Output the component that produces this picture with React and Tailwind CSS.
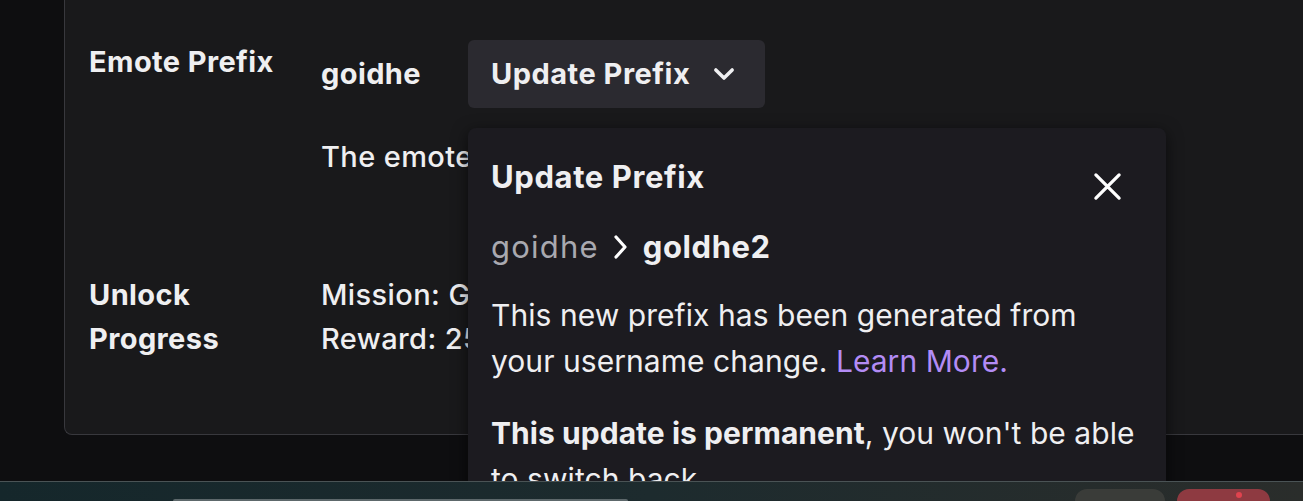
import React from "react"

const ChevronDown = ({ className }) => (
  <svg viewBox="0 0 24 24" fill="none" stroke="currentColor" strokeWidth="3" strokeLinecap="round" strokeLinejoin="round" className={className}>
    <path d="M5 8.5l7 7 7-7" />
  </svg>
)

const ChevronRight = ({ className }) => (
  <svg viewBox="0 0 20 28" fill="none" stroke="currentColor" strokeWidth="3.2" strokeLinecap="round" strokeLinejoin="round" className={className}>
    <path d="M5 4l9 10-9 10" />
  </svg>
)

const CloseIcon = ({ className }) => (
  <svg viewBox="0 0 30 30" fill="none" stroke="currentColor" strokeWidth="3.4" strokeLinecap="round" className={className}>
    <path d="M3 3l24 24M27 3L3 27" />
  </svg>
)

const UpdatePrefixPopover = () => (
  <div className="absolute left-0 top-[88px] w-[698px] h-[420px] rounded-lg bg-[#1c1b20] shadow-[0_4px_16px_rgba(0,0,0,0.6)] pl-[23px] pr-[20px] pt-[27px] text-[30px] leading-[46px] tracking-[0.05px] text-[#efeff1]">
    <div className="flex items-start justify-between">
      <h2 className="text-[31px] font-bold tracking-[0.6px] leading-[44px]">Update Prefix</h2>
      <button className="mt-[17px] mr-[24px] text-white">
        <CloseIcon className="w-[29px] h-[29px]" />
      </button>
    </div>
    <div className="flex items-center mt-[23px] text-[31px]">
      <span className="text-[#a9a9b0] tracking-[1.2px]">goidhe</span>
      <ChevronRight className="w-[20px] h-[28px] ml-[12px] mr-[12px] text-white" />
      <span className="font-bold tracking-[0.6px]">goldhe2</span>
    </div>
    <p className="mt-[22px]">
      This new prefix has been generated from your username change.{" "}
      <a className="text-[#b38cf5]">Learn More.</a>
    </p>
    <p className="mt-[26px]">
      <strong className="font-bold">This update is permanent</strong>, you won't be able to switch back.
    </p>
  </div>
)

const Taskbar = () => (
  <div className="relative z-10 h-[20px] flex items-end border-t border-[#4a5355] bg-gradient-to-r from-[#15272b] via-[#1d2b2e] to-[#2a2d2b]">
    <div className="ml-[173px] w-[455px] h-[2px] rounded-t-md bg-[#5d686b]" />
    <div className="ml-auto w-[90px] h-[12px] rounded-t-xl bg-[#3a3c39]" />
    <div className="ml-[12px] mr-[33px] w-[93px] h-[12px] rounded-t-xl bg-[#8e3a41] flex justify-center">
      <div className="ml-[30px] mt-[3px] w-[6px] h-[6px] rounded-full bg-[#e0434e]" />
    </div>
  </div>
)

export default function App() {
  return (
    <div
      className="w-[1303px] h-[501px] bg-[#0e0e10] overflow-hidden flex flex-col text-[#efeff1]"
      style={{ fontFamily: "Inter, 'Noto Sans', sans-serif" }}
    >
      <div className="h-[481px] overflow-hidden pl-[64px]">
        <div className="h-[435px] bg-[#19191b] border-l border-b border-[#38383d] rounded-bl-lg pl-[24px] pt-[40px] text-[29px] leading-[44px] tracking-[0.4px]">
          <div className="flex">
            <div className="w-[232px] font-bold">Emote Prefix</div>
            <div className="flex flex-col">
              <div className="flex items-center">
                <span className="w-[147px] font-bold">goidhe</span>
                <div className="relative">
                  <button className="h-[68px] flex items-center gap-[20px] pl-[23px] pr-[27px] rounded-md bg-[#2b2a30] font-bold tracking-[0.5px]">
                    Update Prefix
                    <ChevronDown className="w-[28px] h-[28px]" />
                  </button>
                  <UpdatePrefixPopover />
                </div>
              </div>
              <p className="mt-[27px] font-medium">The emote prefix is unique to your channel.</p>
            </div>
          </div>
          <div className="flex mt-[94px]">
            <div className="w-[232px] font-bold">
              Unlock
              <br />
              Progress
            </div>
            <div className="font-medium">
              <div>Mission: Get 25 subscribers</div>
              <div>Reward: 25 emote slots</div>
            </div>
          </div>
        </div>
      </div>
      <Taskbar />
    </div>
  )
}
